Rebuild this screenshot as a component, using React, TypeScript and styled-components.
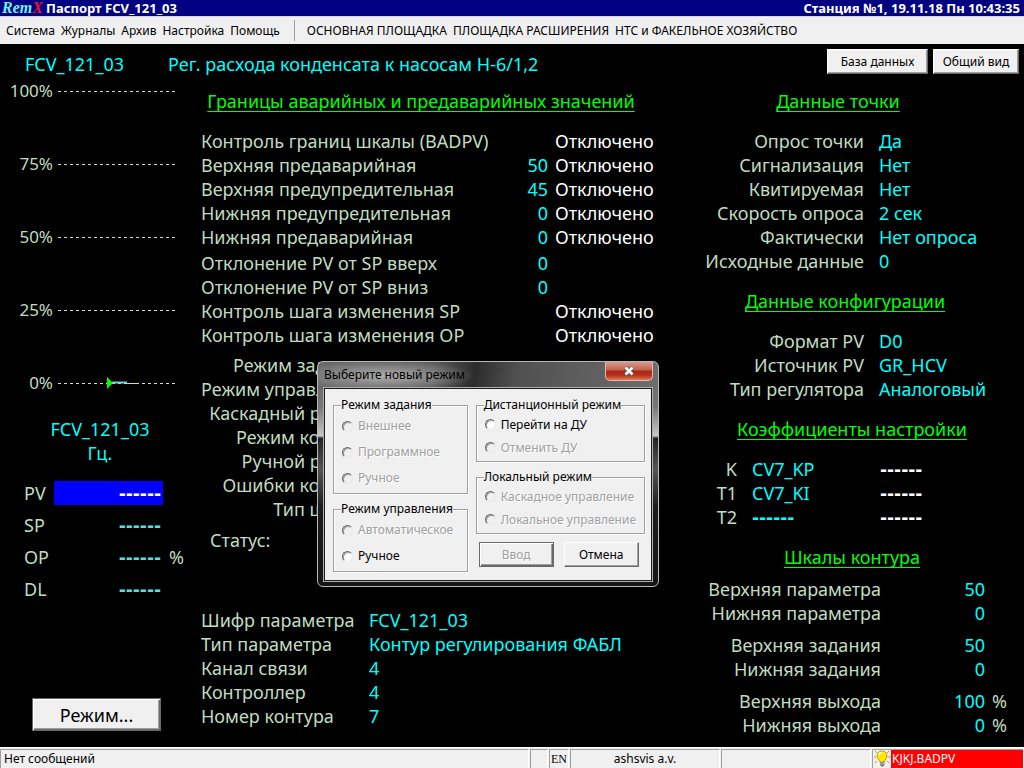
import React from 'react';
import styled, { createGlobalStyle, css } from 'styled-components';

const GlobalStyle = createGlobalStyle`
  * { box-sizing: border-box; }
  body {
    margin: 0;
    background: #000;
    font-family: "Noto Sans", "Open Sans", sans-serif;
    font-size: 18px;
    line-height: 24px;
    color: #c0dcc0;
  }
  button, input, fieldset { font-family: inherit; }
`;

const Screen = styled.div`
  display: flex;
  flex-direction: column;
  min-height: 100vh;
`;

const TitleBar = styled.header`
  display: flex;
  align-items: center;
  height: 17px;
  padding: 0 4px 0 2px;
  border-bottom: 1px solid #d8d8d8;
  background: #000080;
  color: #fff;
  font-size: 13px;
  font-weight: 700;
  line-height: 16px;
  white-space: nowrap;
`;

const Logo = styled.span`
  width: 44px;
  color: #6ff6ff;
  font-family: "Liberation Serif", serif;
  font-style: italic;
  font-size: 16px;
`;

const LogoX = styled.span`
  color: #f01030;
`;

const Caption = styled.h1`
  flex: 1;
  margin: 0;
  font-size: inherit;
`;

const MenuBar = styled.nav`
  display: flex;
  align-items: center;
  gap: 6px;
  height: 27px;
  padding: 0 6px;
  background: #f0f0f0;
  white-space: nowrap;
`;

const MenuItem = styled.button`
  padding: 0;
  border: 0;
  background: none;
  color: #000;
  font-size: 12px;
  line-height: 24px;
`;

const MenuDivider = styled.span`
  width: 1px;
  height: 21px;
  margin: 0 6px 0 8px;
  background: #a0a0a0;
`;

const Main = styled.main`
  position: relative;
  flex: 1;
  display: flex;
  flex-direction: column;
`;

const PointHeader = styled.div`
  display: flex;
  gap: 5px;
  padding: 5px 5px 0 0;
  color: #0ff;
  line-height: 30px;
`;

const PointName = styled.span`
  width: 163px;
  padding-left: 25px;
`;

const PointTitle = styled.span`
  flex: 1;
`;

const bevel = css`
  border: 1px solid;
  border-color: #fff #696969 #696969 #fff;
  box-shadow: inset -1px -1px #a0a0a0;
`;

const PushButton = styled.button<{ $framed?: boolean }>`
  ${bevel}
  height: 25px;
  padding: 0 12px;
  background: #f0f0f0;
  color: #000;
  font-size: 12px;
  line-height: 20px;
  ${p => p.$framed && css`
    border: 1px solid #696969;
    box-shadow: inset 1px 1px #fff, inset -1px -1px #696969, inset -2px -2px #a0a0a0;
  `}
  &:disabled {
    color: #a0a0a0;
    text-shadow: 1px 1px #fff;
  }
`;

const HeaderButton = styled(PushButton)<{ $wide?: boolean }>`
  width: ${p => (p.$wide ? 101 : 86)}px;
  padding: 0;
`;

const ModeButton = styled(PushButton)`
  width: 129px;
  height: 33px;
  margin: auto 0 16px 32px;
  font-size: 18px;
`;

const Columns = styled.div`
  flex: 1;
  display: grid;
  grid-template-columns: 201px minmax(460px, 1fr) 330px;
`;

const LeftPanel = styled.section`
  display: flex;
  flex-direction: column;
`;

const Scale = styled.div`
  display: flex;
  flex-direction: column;
  gap: 49px;
`;

const ScaleRow = styled.div`
  display: grid;
  grid-template-columns: 53px 118px;
  column-gap: 5px;
  align-items: center;
  font-size: 17px;
  text-align: right;
`;

const ScaleLine = styled.span`
  position: relative;
  height: 1px;
  background: repeating-linear-gradient(90deg, #d8d8d8 0 3px, transparent 3px 6px);
`;

const Pointer = styled.svg`
  position: absolute;
  left: 49px;
  top: -6px;
`;

const Unit = styled.div`
  margin: 22px 0 12px;
  padding-right: 1px;
  color: #0ff;
  text-align: center;
`;

const ReadingRow = styled.div`
  display: grid;
  grid-template-columns: 24px 109px 20px;
  column-gap: 6px;
  align-items: center;
  height: 32px;
  padding-left: 24px;
`;

const Reading = styled.span<{ $selected?: boolean }>`
  padding-right: 2px;
  text-align: right;
  background: ${p => (p.$selected ? '#0000ff' : 'none')};
  color: ${p => (p.$selected ? '#fff' : '#5cdcdc')};
`;

const Dashes = styled.span`
  font-family: "DejaVu Sans", sans-serif;
  font-size: 17px;
  font-weight: 700;
  line-height: 20px;
`;

const CenterPanel = styled.section`
  padding-top: 10px;
`;

const Heading = styled.h2<{ $inset?: number }>`
  margin: 0 0 16px;
  padding-right: ${p => p.$inset || 0}px;
  color: #00ff00;
  font-size: 18px;
  font-weight: 400;
  text-align: center;
  text-decoration: underline 1px;
  text-underline-offset: 3px;
  text-decoration-skip-ink: none;
  white-space: nowrap;
`;

const CenterHeading = styled(Heading)`
  width: 440px;
`;

const Table = styled.table<{ $gap?: number }>`
  border-collapse: collapse;
  margin-bottom: ${p => p.$gap || 0}px;
  white-space: nowrap;
`;

const Cell = styled.td<{ $w?: number; $right?: boolean; $tone?: 'cyan' | 'white' }>`
  width: ${p => (p.$w ? p.$w + 'px' : 'auto')};
  padding: 0;
  text-align: ${p => (p.$right ? 'right' : 'left')};
  color: ${p => (p.$tone === 'cyan' ? '#0ff' : p.$tone === 'white' ? '#fff' : 'inherit')};
`;

const NameCell = styled.th<{ $w: number; $right?: boolean }>`
  width: ${p => p.$w}px;
  padding: 0;
  font-weight: 400;
  text-align: ${p => (p.$right ? 'right' : 'left')};
`;

const ModeList = styled.ul`
  width: 168px;
  margin: 6px 0 7px;
  padding: 0;
  list-style: none;
  white-space: nowrap;
  text-align: right;
`;

const Status = styled.p`
  margin: 0 0 56px;
  padding-left: 9px;
`;

const RightPanel = styled.section`
  padding: 10px 14px 0 0;
`;

const Gap = styled(Cell)`
  width: 15px;
`;

const StatusBar = styled.footer`
  display: grid;
  grid-template-columns: 1fr 18px 20px 150px 150px 152px;
  gap: 1px;
  height: 21px;
  padding-top: 1px;
  background: #f0f0f0;
  border-top: 1px solid #fff;
  color: #000;
  font-size: 12px;
  line-height: 18px;
`;

const StatusCell = styled.div<{ $center?: boolean; $serif?: boolean }>`
  display: flex;
  justify-content: ${p => (p.$center ? 'center' : 'flex-start')};
  padding-left: ${p => (p.$center ? 0 : 3)}px;
  border: 1px solid;
  border-color: #a0a0a0 #fff #fff #a0a0a0;
  white-space: nowrap;
  ${p => p.$serif && css`font-family: "Liberation Serif", serif;`}
`;

const AlarmCell = styled(StatusCell)`
  padding-left: 1px;
`;

const Alarm = styled.span`
  flex: 1;
  padding-left: 1px;
  background: #f00;
  color: #fff;
`;

const Dialog = styled.div`
  position: absolute;
  left: 317px;
  top: 317px;
  width: 342px;
  padding: 0 6px 5px;
  border: 1px solid #b8b8b8;
  border-radius: 6px;
  background:
    radial-gradient(ellipse 90px 16px at 68px 14px, rgba(200, 200, 200, 0.75), transparent),
    linear-gradient(100deg, #6a6a6a 0, #5a5a5a 34%, #2c2c2c 46%, #505050 58%, #6e6e6e 100%) 0 0 / 100% 28px no-repeat,
    linear-gradient(#606060 0, #777 20%, #c8c8c8 33%, #222 34%, #555 48%, #1c1c1c 65%, #161616);
  color: #000;
  font-size: 12px;
`;

const DialogTitle = styled.div`
  display: flex;
  justify-content: space-between;
  height: 26px;
  line-height: 26px;
`;

const CloseButton = styled.button`
  display: flex;
  align-items: center;
  justify-content: center;
  width: 48px;
  height: 19px;
  margin-right: -1px;
  padding: 0;
  border: 1px solid #e4b8b0;
  border-top: 0;
  border-radius: 0 0 5px 5px;
  background: linear-gradient(#d89a8e 0, #c4604e 45%, #a82410 50%, #b83420 75%, #e07858);
`;

const DialogBody = styled.form`
  display: grid;
  grid-template-columns: 136fr 168fr;
  gap: 8px;
  padding: 9px 6px 8px 8px;
  border: 1px solid #1c1c1c;
  outline: 1px solid #b0b0b0;
  background: #f0f0f0;
`;

const DialogColumn = styled.div`
  display: flex;
  flex-direction: column;
  gap: 8px;
`;

const Group = styled.fieldset`
  min-width: 0;
  margin: 0;
  padding: 1px 8px 2px;
  border: 1px solid #a0a0a0;
  box-shadow: 1px 1px #fff, inset 1px 1px #fff;
`;

const Legend = styled.legend`
  margin-left: -1px;
  padding: 0;
  background: #f0f0f0;
  line-height: 14px;
  white-space: nowrap;
`;

const Option = styled.label<{ $tall?: boolean; $off?: boolean }>`
  display: flex;
  align-items: center;
  gap: 5px;
  height: ${p => (p.$tall ? 26 : 23)}px;
  white-space: nowrap;
  color: ${p => (p.$off ? '#a0a0a0' : '#000')};
  text-shadow: ${p => (p.$off ? '1px 1px #fff' : 'none')};
`;

const Radio = styled.input`
  appearance: none;
  flex: none;
  width: 11px;
  height: 11px;
  margin: 0;
  border: 1px solid;
  border-color: #696969 #e8e8e8 #e8e8e8 #696969;
  border-radius: 50%;
  background: #fff;
  box-shadow: inset 1px 1px #a0a0a0;
  &:disabled { background: #f0f0f0; }
`;

const DialogButtons = styled.div`
  display: grid;
  grid-template-columns: 75px 75px;
  gap: 10px;
  padding-left: 3px;
`;

const DASH = '------';

function Value({ children }: { children: string }) {
  return children === DASH ? <Dashes>{DASH}</Dashes> : <>{children}</>;
}

function Options({ title, name, tall, items }: {
  title: string; name: string; tall?: boolean; items: [string, boolean][];
}) {
  return (
    <Group>
      <Legend>{title}</Legend>
      {items.map(([text, on]) => (
        <Option key={text} $tall={tall} $off={!on}>
          <Radio type="radio" name={name} disabled={!on} />
          {text}
        </Option>
      ))}
    </Group>
  );
}

function Limits({ rows, gap }: { rows: [string, string, string][]; gap?: number }) {
  return (
    <Table $gap={gap}>
      <tbody>
        {rows.map(([name, value, state]) => (
          <tr key={name}>
            <NameCell $w={300} scope="row">{name}</NameCell>
            <Cell $w={47} $right $tone="cyan">{value}</Cell>
            <Cell $w={7} />
            <Cell $w={100} $tone="white">{state}</Cell>
          </tr>
        ))}
      </tbody>
    </Table>
  );
}

function Facts({ rows }: { rows: [string, string][] }) {
  return (
    <Table $gap={16}>
      <tbody>
        {rows.map(([name, value]) => (
          <tr key={name}>
            <NameCell $w={170} $right scope="row">{name}</NameCell>
            <Gap />
            <Cell $tone="cyan">{value}</Cell>
          </tr>
        ))}
      </tbody>
    </Table>
  );
}

function Ranges({ rows }: { rows: [string, string, string][] }) {
  return (
    <Table>
      <tbody>
        {rows.map(([name, value, unit]) => (
          <tr key={name}>
            <NameCell $w={187} $right scope="row">{name}</NameCell>
            <Cell $w={104} $right $tone="cyan">{value}</Cell>
            <Cell $w={7} />
            <Cell>{unit}</Cell>
          </tr>
        ))}
      </tbody>
    </Table>
  );
}

const RangesBlock = styled.div`
  display: flex;
  flex-direction: column;
  gap: 8px;
  margin-top: -8px;
`;

export default function App() {
  return (
    <Screen>
      <GlobalStyle />
      <TitleBar>
        <Logo>Rem<LogoX>X</LogoX></Logo>
        <Caption>Паспорт FCV_121_03</Caption>
        <span>Станция №1, 19.11.18 Пн 10:43:35</span>
      </TitleBar>
      <MenuBar>
        {['Система', 'Журналы', 'Архив', 'Настройка', 'Помощь'].map(t => <MenuItem key={t}>{t}</MenuItem>)}
        <MenuDivider />
        {['ОСНОВНАЯ ПЛОЩАДКА', 'ПЛОЩАДКА РАСШИРЕНИЯ', 'НТС и ФАКЕЛЬНОЕ ХОЗЯЙСТВО'].map(t => <MenuItem key={t}>{t}</MenuItem>)}
      </MenuBar>

      <Main>
        <PointHeader>
          <PointName>FCV_121_03</PointName>
          <PointTitle>Рег. расхода конденсата к насосам Н-6/1,2</PointTitle>
          <HeaderButton $wide>База данных</HeaderButton>
          <HeaderButton>Общий вид</HeaderButton>
        </PointHeader>

        <Columns>
          <LeftPanel>
            <Scale>
              {[100, 75, 50, 25, 0].map(n => (
                <ScaleRow key={n}>
                  <span>{n}%</span>
                  <ScaleLine>
                    {n === 0 && (
                      <Pointer width="32" height="12" viewBox="0 0 32 12">
                        <path d="M5 5.5H20" stroke="#5cdcdc" strokeWidth="2" />
                        <path d="M20 6.5H31" stroke="#e8e060" strokeWidth="1" />
                        <path d="M0 0L6 6L0 12Z" fill="#00ff00" />
                      </Pointer>
                    )}
                  </ScaleLine>
                </ScaleRow>
              ))}
            </Scale>
            <Unit>FCV_121_03<br />Гц.</Unit>
            {['PV', 'SP', 'OP', 'DL'].map(n => (
              <ReadingRow key={n}>
                <span>{n}</span>
                <Reading $selected={n === 'PV'}><Dashes>{DASH}</Dashes></Reading>
                {n === 'OP' && <span>%</span>}
              </ReadingRow>
            ))}
            <ModeButton $framed>Режим...</ModeButton>
          </LeftPanel>

          <CenterPanel>
            <CenterHeading>Границы аварийных и предаварийных значений</CenterHeading>
            <Limits gap={2} rows={[
              ['Контроль границ шкалы (BADPV)', '', 'Отключено'],
              ['Верхняя предаварийная', '50', 'Отключено'],
              ['Верхняя предупредительная', '45', 'Отключено'],
              ['Нижняя предупредительная', '0', 'Отключено'],
              ['Нижняя предаварийная', '0', 'Отключено'],
            ]} />
            <Limits rows={[
              ['Отклонение PV от SP вверх', '0', ''],
              ['Отклонение PV от SP вниз', '0', ''],
              ['Контроль шага изменения SP', '', 'Отключено'],
              ['Контроль шага изменения OP', '', 'Отключено'],
            ]} />
            <ModeList>
              {['Режим задания', 'Режим управления', 'Каскадный режим', 'Режим контура', 'Ручной режим', 'Ошибки контура', 'Тип шкалы']
                .map(t => <li key={t}>{t}</li>)}
            </ModeList>
            <Status>Статус:</Status>
            <Table>
              <tbody>
                {[
                  ['Шифр параметра', 'FCV_121_03'],
                  ['Тип параметра', 'Контур регулирования ФАБЛ'],
                  ['Канал связи', '4'],
                  ['Контроллер', '4'],
                  ['Номер контура', '7'],
                ].map(([name, value]) => (
                  <tr key={name}>
                    <NameCell $w={168} scope="row">{name}</NameCell>
                    <Cell $tone="cyan">{value}</Cell>
                  </tr>
                ))}
              </tbody>
            </Table>
          </CenterPanel>

          <RightPanel>
            <Heading $inset={28}>Данные точки</Heading>
            <Facts rows={[
              ['Опрос точки', 'Да'],
              ['Сигнализация', 'Нет'],
              ['Квитируемая', 'Нет'],
              ['Скорость опроса', '2 сек'],
              ['Фактически', 'Нет опроса'],
              ['Исходные данные', '0'],
            ]} />
            <Heading $inset={14}>Данные конфигурации</Heading>
            <Facts rows={[
              ['Формат PV', 'D0'],
              ['Источник PV', 'GR_HCV'],
              ['Тип регулятора', 'Аналоговый'],
            ]} />
            <Heading>Коэффициенты настройки</Heading>
            <Table $gap={16}>
              <tbody>
                {[['K', 'CV7_KP'], ['T1', 'CV7_KI'], ['T2', DASH]].map(([name, value]) => (
                  <tr key={name}>
                    <NameCell $w={43} $right scope="row">{name}</NameCell>
                    <Gap />
                    <Cell $w={128} $tone="cyan"><Value>{value}</Value></Cell>
                    <Cell $tone="white"><Value>{DASH}</Value></Cell>
                  </tr>
                ))}
              </tbody>
            </Table>
            <Heading>Шкалы контура</Heading>
            <RangesBlock>
              <Ranges rows={[['Верхняя параметра', '50', ''], ['Нижняя параметра', '0', '']]} />
              <Ranges rows={[['Верхняя задания', '50', ''], ['Нижняя задания', '0', '']]} />
              <Ranges rows={[['Верхняя выхода', '100', '%'], ['Нижняя выхода', '0', '%']]} />
            </RangesBlock>
          </RightPanel>
        </Columns>

        <Dialog role="dialog" aria-label="Выберите новый режим">
          <DialogTitle>
            <span>Выберите новый режим</span>
            <CloseButton aria-label="Закрыть">
              <svg width="12" height="10" viewBox="0 0 12 10">
                <path d="M2.5 1.5L9.5 8.5M9.5 1.5L2.5 8.5" stroke="#555" strokeWidth="4" />
                <path d="M2.5 1.5L9.5 8.5M9.5 1.5L2.5 8.5" stroke="#fff" strokeWidth="2.5" />
              </svg>
            </CloseButton>
          </DialogTitle>
          <DialogBody>
            <DialogColumn>
              <Options tall title="Режим задания" name="task"
                items={[['Внешнее', false], ['Программное', false], ['Ручное', false]]} />
              <Options tall title="Режим управления" name="control"
                items={[['Автоматическое', false], ['Ручное', true]]} />
            </DialogColumn>
            <DialogColumn>
              <Options title="Дистанционный режим" name="remote"
                items={[['Перейти на ДУ', true], ['Отменить ДУ', false]]} />
              <Options title="Локальный режим" name="local"
                items={[['Каскадное управление', false], ['Локальное управление', false]]} />
              <DialogButtons>
                <PushButton type="button" $framed disabled>Ввод</PushButton>
                <PushButton type="button">Отмена</PushButton>
              </DialogButtons>
            </DialogColumn>
          </DialogBody>
        </Dialog>
      </Main>

      <StatusBar>
        <StatusCell>Нет сообщений</StatusCell>
        <StatusCell />
        <StatusCell $center $serif>EN</StatusCell>
        <StatusCell $center>ashsvis a.v.</StatusCell>
        <StatusCell />
        <AlarmCell>
          <svg width="17" height="17" viewBox="0 0 17 17">
            <path d="M1 1L3 3M15 1L13 3M0 7H2M14 7H17M1 13L3 11M15 13L13 11" stroke="#d89030" strokeWidth="1" />
            <path d="M8 1C4.500 1 3 3.500 3 6C3 9 6 9.500 6 12H10.500C10.500 9.500 13 9 13 6C13 3.500 11.500 1 8 1Z" fill="#ffe800" stroke="#b08000" strokeWidth="0.800" />
            <path d="M5 5C5 3.500 6 2.500 8 2.500" stroke="#fffbd0" strokeWidth="1.500" fill="none" />
            <path d="M6 12.500H10.500V15L9 16.500H7.500L6 15Z" fill="#707070" />
            <path d="M6 14H10.500" stroke="#e0e0e0" strokeWidth="0.800" />
          </svg>
          <Alarm>KJKJ.BADPV</Alarm>
        </AlarmCell>
      </StatusBar>
    </Screen>
  );
}
